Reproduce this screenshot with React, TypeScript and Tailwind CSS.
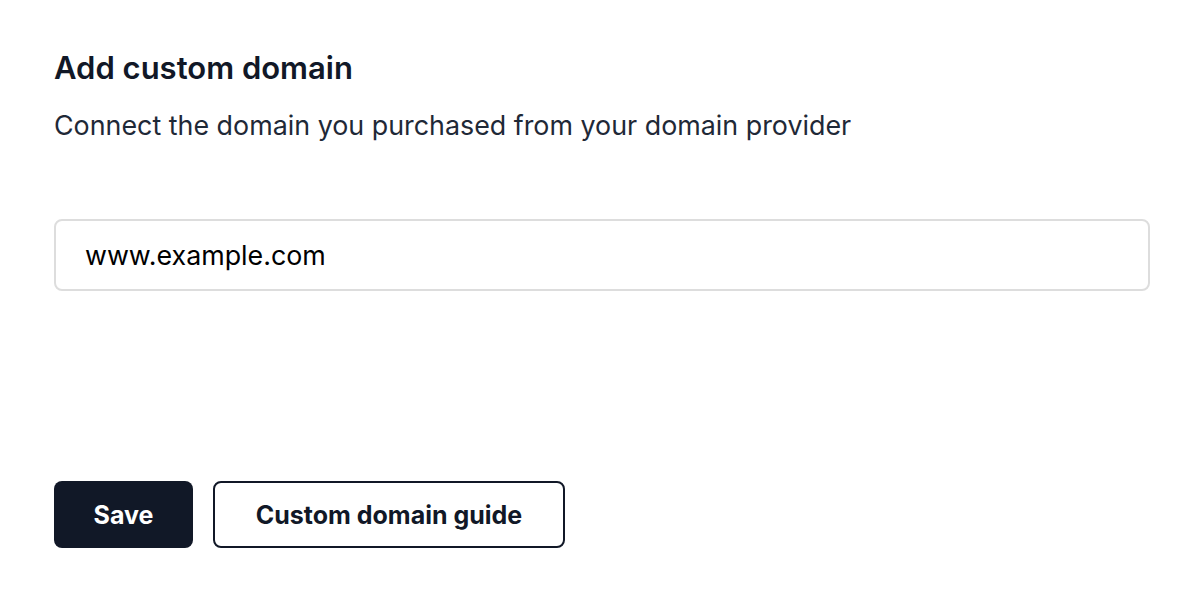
export default function App() {
  return (
    <div className="min-h-[602px] bg-white px-[54px] pt-[50px] font-['Inter','Liberation_Sans',sans-serif] text-[#111827]">
      <h2 className="text-[31px] font-semibold leading-[36px]">Add custom domain</h2>
      <p className="mt-[22px] text-[26.85px] leading-[34px] text-[#1f2937]">
        Connect the domain you purchased from your domain provider
      </p>
      <div className="mt-[77px] w-[1096px]">
        <input
          type="text"
          defaultValue="www.example.com"
          className="h-[72px] w-full rounded-[8px] border-2 border-[#dddddd] bg-white px-[29px] text-[26.8px] text-black outline-none"
        />
      </div>
      <div className="mt-[190px] flex gap-[20px]">
        <button
          type="button"
          className="h-[67px] w-[139px] rounded-[8px] bg-[#111827] pt-[2px] text-[25px] font-bold text-white"
        >
          Save
        </button>
        <button
          type="button"
          className="h-[67px] w-[352px] rounded-[8px] border-2 border-[#111827] bg-white pt-[2px] text-[25px] font-bold text-[#111827]"
        >
          Custom domain guide
        </button>
      </div>
    </div>
  );
}
